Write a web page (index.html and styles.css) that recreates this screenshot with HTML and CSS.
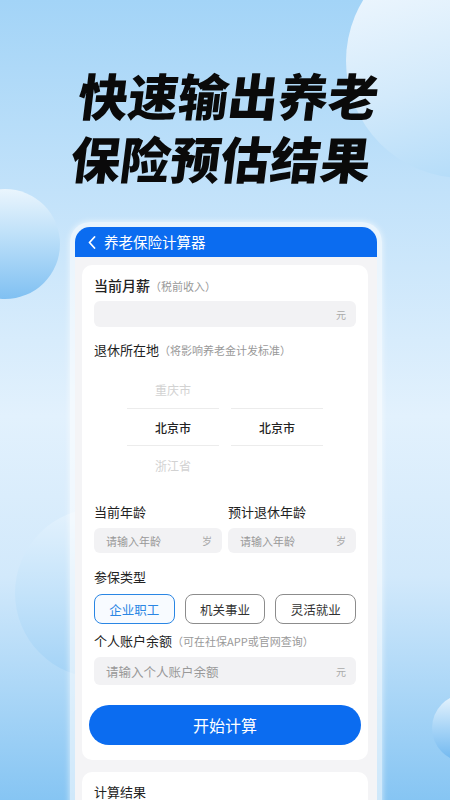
FILE: index.html
```html
<!DOCTYPE html>
<html lang="zh">
<head>
<meta charset="utf-8">
<link rel="stylesheet" href="styles.css">
</head>
<body>
<div class="page">
  <div class="deco c1"></div>
  <div class="deco c2"></div>
  <div class="deco c3"></div>
  <div class="deco c4"></div>

  <div class="hero">
    <div>快速输出养老</div>
    <div>保险预估结果</div>
  </div>

  <div class="frame">
    <div class="bar">
      <svg class="back" width="8" height="13" viewBox="0 0 8 13"><polyline points="6.5,1 1.5,6.5 6.5,12" fill="none" stroke="#fff" stroke-width="1.8" stroke-linecap="round" stroke-linejoin="round"/></svg>
      <span class="bar-title">养老保险计算器</span>
    </div>
    <div class="screen">
      <div class="card">
        <div class="label"><span class="main strong">当前月薪</span><span class="hint">（税前收入）</span></div>
        <div class="input"><span></span><span class="unit">元</span></div>

        <div class="label gap13"><span class="main">退休所在地</span><span class="hint">（将影响养老金计发标准）</span></div>
        <div class="picker">
          <div class="col">
            <div class="opt faint">重庆市</div>
            <div class="opt sel">北京市</div>
            <div class="opt faint">浙江省</div>
          </div>
          <div class="col">
            <div class="opt"></div>
            <div class="opt sel">北京市</div>
            <div class="opt"></div>
          </div>
        </div>

        <div class="pair gap18">
          <div class="field">
            <div class="label"><span class="main">当前年龄</span></div>
            <div class="input small"><span class="ph">请输入年龄</span><span class="unit">岁</span></div>
          </div>
          <div class="field">
            <div class="label"><span class="main">预计退休年龄</span></div>
            <div class="input small"><span class="ph">请输入年龄</span><span class="unit">岁</span></div>
          </div>
        </div>

        <div class="label gap14"><span class="main">参保类型</span></div>
        <div class="types">
          <div class="type on">企业职工</div>
          <div class="type">机关事业</div>
          <div class="type">灵活就业</div>
        </div>

        <div class="label gap7"><span class="main">个人账户余额</span><span class="hint">（可在社保APP或官网查询）</span></div>
        <div class="input tall"><span class="ph big">请输入个人账户余额</span><span class="unit">元</span></div>

        <div class="go">开始计算</div>
      </div>

      <div class="card result">
        <div class="label"><span class="main">计算结果</span></div>
      </div>
    </div>
  </div>
</div>
</body>
</html>
```

FILE: styles.css
```css
* { box-sizing: border-box; margin: 0; padding: 0; }
html, body { width: 450px; height: 800px; overflow: hidden; }
body {
  font-family: "Noto Sans CJK SC", "Noto Sans", sans-serif;
  color: #222;
  background: linear-gradient(180deg, #a3d4f7 0%, #c2e2fa 24%, #e2f1fd 52%, #d2e9fb 72%, #86c5f3 100%);
}
.page { position: relative; width: 450px; height: 800px; overflow: hidden; }

.deco { position: absolute; border-radius: 50%; }
.c1 { left: 346px; top: -56px; width: 234px; height: 234px;
  background: linear-gradient(165deg, #f1f8fe 10%, #d3eafb 55%, #abd8f8 100%); }
.c2 { left: -50px; top: 189px; width: 110px; height: 110px;
  background: linear-gradient(180deg, #eaf5fd 0%, #b5dcf8 50%, #80c0f2 100%); }
.c3 { left: 15px; top: 508px; width: 170px; height: 170px;
  background: linear-gradient(180deg, #e4f2fd 0%, #c4e3fa 50%, #a2d2f6 100%); }
.c4 { left: 432px; top: 694px; width: 68px; height: 68px;
  background: linear-gradient(180deg, #eaf5fd 0%, #a8d5f7 50%, #6db6ef 100%); }

.hero {
  position: relative;
  padding-top: 63px;
  font-size: 50px;
  line-height: 63px;
  font-weight: 900;
  color: #0a0a0a;
  text-align: center;
  transform: skewX(-7deg);
  transform-origin: 50% 126px;
}

.frame {
  position: relative;
  margin: 33px 0 0 70px;
  width: 312px;
  height: 600px;
  padding: 5px 5px 0;
  border-radius: 20px 20px 0 0;
  background: rgba(255, 255, 255, 0.6);
  box-shadow: 0 0 6px rgba(255, 255, 255, 0.7);
}
.bar {
  height: 30px;
  background: #0b6cf0;
  border-radius: 15px 15px 0 0;
  display: flex;
  align-items: center;
  padding-left: 13px;
  gap: 8px;
}
.bar-title { color: #fff; font-size: 14.5px; line-height: 20px; }
.back { display: block; }

.screen {
  background: #f4f4f6;
  padding: 8px 9px 0 7px;
  height: 570px;
}
.card {
  background: #fff;
  border-radius: 10px;
  padding: 10px 12px 15px;
}
.card.result { margin-top: 12px; padding-top: 10px; height: 60px; }

.label { display: flex; align-items: baseline; line-height: 20px; height: 20px; }
.main { font-size: 13px; color: #222; }
.main.strong { font-size: 14px; font-weight: 500; }
.hint { font-size: 11px; color: #999; }
.gap13 { margin-top: 13px; }
.gap14 { margin-top: 14px; }
.gap18 { margin-top: 18px; }
.gap7 { margin-top: 7px; }

.input {
  margin-top: 6px;
  height: 26px;
  background: #f2f2f4;
  border-radius: 6px;
  display: flex;
  align-items: center;
  justify-content: space-between;
  padding: 0 10px 0 12px;
}
.input.small { height: 25px; }
.input.tall { height: 28px; }
.unit { font-size: 10px; color: #aaa; }
.ph { font-size: 11px; color: #999; }
.ph.big { font-size: 12.5px; }

.picker {
  margin-top: 10px;
  display: grid;
  grid-template-columns: 92px 92px;
  column-gap: 12px;
  justify-content: center;
}
.opt {
  height: 38px;
  display: flex;
  align-items: center;
  justify-content: center;
  font-size: 12px;
}
.opt.faint { color: #d2d2d2; }
.opt.sel { color: #222; font-weight: 500; border-top: 1px solid #ececec; border-bottom: 1px solid #ececec; }

.pair { display: grid; grid-template-columns: 1fr 1fr; column-gap: 6px; }

.types {
  margin-top: 7px;
  display: grid;
  grid-template-columns: 1fr 1fr 1fr;
  column-gap: 10px;
}
.type {
  height: 30px;
  border: 1px solid #8c8c8c;
  border-radius: 8px;
  display: flex;
  align-items: center;
  justify-content: center;
  font-size: 12.5px;
  color: #333;
}
.type.on { border-color: #2a86e4; color: #2a86e4; background: #f8fbff; }

.go {
  margin: 20px -5px 0;
  height: 40px;
  border-radius: 20px;
  background: #0b6cf0;
  color: #fff;
  font-size: 16px;
  display: flex;
  align-items: center;
  justify-content: center;
}
```
